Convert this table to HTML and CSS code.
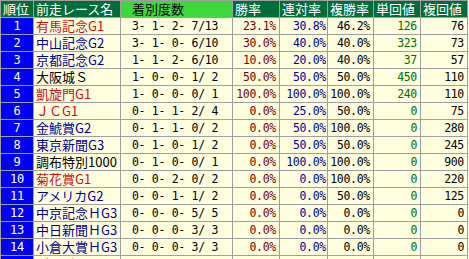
FILE: index.html
```html
<!DOCTYPE html>
<html lang="ja">
<head>
<meta charset="utf-8">
<title>前走レース別成績</title>
<link rel="stylesheet" href="styles.css">
</head>
<body>
<table class="stats">
  <colgroup>
    <col class="c-rank"><col class="c-race"><col class="c-rec"><col class="c-win"><col class="c-ren"><col class="c-fuku"><col class="c-tan"><col class="c-fkv">
  </colgroup>
  <thead>
    <tr>
      <th class="h">順位</th>
      <th class="h">前走レース名</th>
      <th class="h h-rec">着別度数</th>
      <th class="h">勝率</th>
      <th class="h">連対率</th>
      <th class="h">複勝率</th>
      <th class="h">単回値</th>
      <th class="h">複回値</th>
    </tr>
  </thead>
  <tbody>
    <tr><td class="rank">1</td><td class="race g1">有馬記念G1</td><td class="rec">3- 1- 2- 7/13</td><td class="num win">23.1%</td><td class="num ren">30.8%</td><td class="num">46.2%</td><td class="num tan">126</td><td class="num">76</td></tr>
    <tr><td class="rank">2</td><td class="race g2">中山記念G2</td><td class="rec">3- 1- 0- 6/10</td><td class="num win">30.0%</td><td class="num ren">40.0%</td><td class="num">40.0%</td><td class="num tan">323</td><td class="num">73</td></tr>
    <tr><td class="rank">3</td><td class="race g2">京都記念G2</td><td class="rec">1- 1- 2- 6/10</td><td class="num win">10.0%</td><td class="num ren">20.0%</td><td class="num">40.0%</td><td class="num tan">37</td><td class="num">57</td></tr>
    <tr><td class="rank">4</td><td class="race">大阪城Ｓ</td><td class="rec">1- 0- 0- 1/ 2</td><td class="num win">50.0%</td><td class="num ren">50.0%</td><td class="num">50.0%</td><td class="num tan">450</td><td class="num">110</td></tr>
    <tr><td class="rank">5</td><td class="race g1">凱旋門G1</td><td class="rec">1- 0- 0- 0/ 1</td><td class="num win">100.0%</td><td class="num ren">100.0%</td><td class="num">100.0%</td><td class="num tan">240</td><td class="num">110</td></tr>
    <tr><td class="rank">6</td><td class="race g1">ＪＣG1</td><td class="rec">0- 1- 1- 2/ 4</td><td class="num win">0.0%</td><td class="num ren">25.0%</td><td class="num">50.0%</td><td class="num tan">0</td><td class="num">75</td></tr>
    <tr><td class="rank">7</td><td class="race g2">金鯱賞G2</td><td class="rec">0- 1- 1- 0/ 2</td><td class="num win">0.0%</td><td class="num ren">50.0%</td><td class="num">100.0%</td><td class="num tan">0</td><td class="num">280</td></tr>
    <tr><td class="rank">8</td><td class="race g2">東京新聞G3</td><td class="rec">0- 1- 0- 1/ 2</td><td class="num win">0.0%</td><td class="num ren">50.0%</td><td class="num">50.0%</td><td class="num tan">0</td><td class="num">245</td></tr>
    <tr><td class="rank">9</td><td class="race">調布特別1000</td><td class="rec">0- 1- 0- 0/ 1</td><td class="num win">0.0%</td><td class="num ren">100.0%</td><td class="num">100.0%</td><td class="num tan">0</td><td class="num">900</td></tr>
    <tr><td class="rank">10</td><td class="race g1">菊花賞G1</td><td class="rec">0- 0- 2- 0/ 2</td><td class="num win">0.0%</td><td class="num ren">0.0%</td><td class="num">100.0%</td><td class="num tan">0</td><td class="num">220</td></tr>
    <tr><td class="rank">11</td><td class="race g2">アメリカG2</td><td class="rec">0- 0- 1- 1/ 2</td><td class="num win">0.0%</td><td class="num ren">0.0%</td><td class="num">50.0%</td><td class="num tan">0</td><td class="num">125</td></tr>
    <tr><td class="rank">12</td><td class="race g2">中京記念ＨG3</td><td class="rec">0- 0- 0- 5/ 5</td><td class="num win">0.0%</td><td class="num ren">0.0%</td><td class="num">0.0%</td><td class="num tan">0</td><td class="num">0</td></tr>
    <tr><td class="rank">13</td><td class="race g2">中日新聞ＨG3</td><td class="rec">0- 0- 0- 3/ 3</td><td class="num win">0.0%</td><td class="num ren">0.0%</td><td class="num">0.0%</td><td class="num tan">0</td><td class="num">0</td></tr>
    <tr><td class="rank">14</td><td class="race g2">小倉大賞ＨG3</td><td class="rec">0- 0- 0- 3/ 3</td><td class="num win">0.0%</td><td class="num ren">0.0%</td><td class="num">0.0%</td><td class="num tan">0</td><td class="num">0</td></tr>
    <tr><td class="rank">15</td><td class="race g1">ダービーG1</td><td class="rec">0- 0- 0- 2/ 2</td><td class="num win">0.0%</td><td class="num ren">0.0%</td><td class="num">0.0%</td><td class="num tan">0</td><td class="num">0</td></tr>
  </tbody>
</table>
</body>
</html>
```

FILE: styles.css
```css
html, body {
  margin: 0;
  padding: 0;
  background: #ffffff;
  overflow: hidden;
}

.stats {
  border-collapse: separate;
  border-spacing: 1px;
  background: #a0a0a0;
  table-layout: fixed;
  width: 468px;
  font-family: "DejaVu Sans Mono", "Noto Sans CJK JP", monospace;
  font-size: 11.5px;
  letter-spacing: -0.3px;
}

.c-rank { width: 32px; }
.c-race { width: 86px; }
.c-rec  { width: 111px; }
.c-win  { width: 46px; }
.c-ren  { width: 47px; }
.c-fuku { width: 45px; }
.c-tan  { width: 46px; }
.c-fkv  { width: 46px; }

.stats th,
.stats td {
  height: 16px;
  line-height: 16px;
  padding: 0;
  white-space: nowrap;
}

.stats th.h {
  background: #006d3a;
  color: #ffffff;
  font-family: "Noto Sans CJK JP", sans-serif;
  font-size: 13px;
  font-weight: normal;
  letter-spacing: 0;
  text-align: left;
  padding-left: 2px;
}

.stats th.h-rec {
  background: #3ed83e;
  color: #000000;
  padding-left: 11px;
}

.stats td.rank {
  background: #0000f4;
  color: #ffffff;
  text-align: center;
  font-size: 12px;
}

.stats td.race,
.stats td.rec,
.stats td.num {
  background: #ffffe0;
}

.stats td.race {
  font-family: "Noto Sans CJK JP", sans-serif;
  font-size: 13px;
  letter-spacing: 0;
  color: #000000;
  padding-left: 2px;
}

.stats td.g1 { color: #d01010; }
.stats td.g2 { color: #00009c; }

.stats td.rec {
  color: #000000;
  padding-left: 11px;
}

.stats td.num {
  text-align: right;
  color: #000000;
  padding-right: 3px;
}

.stats td.win { color: #800000; }
.stats td.ren { color: #00009c; padding-right: 1px; }
.stats td.tan { color: #007000; }
```
